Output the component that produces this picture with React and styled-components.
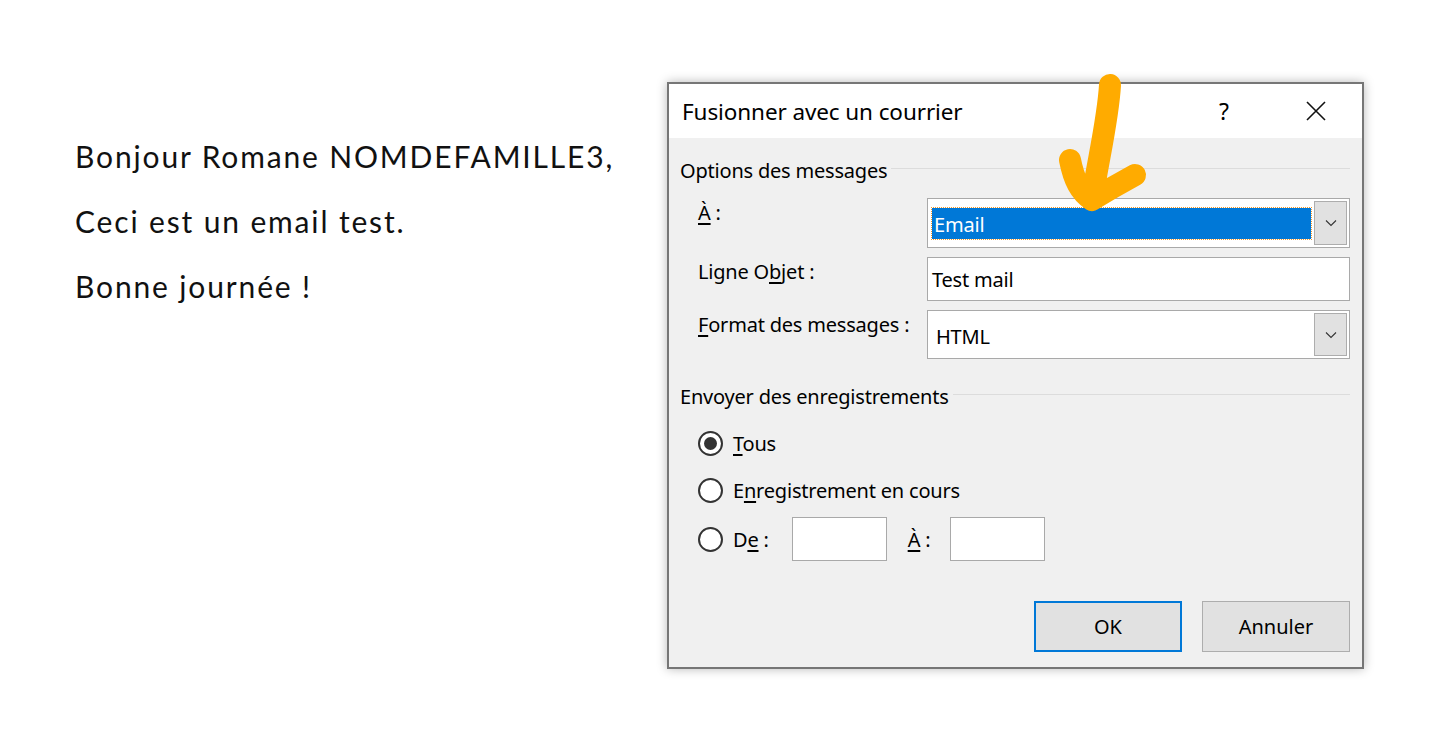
import React from 'react';
import styled, { createGlobalStyle } from 'styled-components';

const GlobalStyle = createGlobalStyle`
  html, body { margin: 0; padding: 0; background: #fff; }
  body { width: 1446px; height: 748px; overflow: hidden; }
`;

const Page = styled.div`
  position: relative;
  display: flex;
  align-items: flex-start;
  width: 1446px;
  height: 748px;
  padding: 82px 82px 0 75px;
  box-sizing: border-box;
`;

const Letter = styled.div`
  margin-top: 42px;
  font-family: "Lato", "Liberation Sans", sans-serif;
  font-size: 30px;
  letter-spacing: 1.85px;
  line-height: 65px;
  color: #111;
  p { margin: 0; }
`;

const Dialog = styled.div`
  margin-left: auto;
  width: 697px;
  height: 587px;
  box-sizing: border-box;
  border: 2px solid #767676;
  background: #f0f0f0;
  box-shadow: 0 0 10px rgba(0, 0, 0, 0.28);
  display: flex;
  flex-direction: column;
  font-family: "Noto Sans", "Open Sans", sans-serif;
  color: #000;
  u { text-decoration-thickness: 1.5px; text-underline-offset: 3px; }
`;

const TitleBar = styled.div`
  height: 54px;
  background: #fff;
  display: flex;
  align-items: center;
  padding-left: 13px;
`;

const Title = styled.div`
  flex: 1;
  font-size: 22.5px;
  letter-spacing: -0.1px;
`;

const TitleButton = styled.div`
  width: 92px;
  height: 54px;
  display: flex;
  align-items: center;
  justify-content: center;
  font-size: 23px;
`;

const Body = styled.div`
  flex: 1;
  display: flex;
  flex-direction: column;
  padding: 18px 12px 0 11px;
`;

const GroupHeader = styled.div`
  display: flex;
  align-items: center;
  gap: 4px;
  font-size: 20px;
  height: 28px;
  letter-spacing: -0.2px;
  &::after {
    content: "";
    flex: 1;
    height: 1px;
    background: #dcdcdc;
    margin-top: -3px;
  }
`;

const FieldGrid = styled.div`
  display: grid;
  grid-template-columns: 229px 1fr;
  row-gap: 9px;
  margin-top: 14px;
  padding-left: 18px;
`;

const Label = styled.div`
  font-size: 20px;
  letter-spacing: -0.2px;
  padding-top: ${p => p.$top || 4}px;
`;

const Combo = styled.div`
  height: ${p => p.$h}px;
  box-sizing: border-box;
  border: 1px solid #a9a9a9;
  background: #fff;
  display: flex;
  align-items: stretch;
  padding: 2px;
`;

const ComboValue = styled.div`
  flex: 1;
  display: flex;
  align-items: center;
  font-size: 20px;
  letter-spacing: -0.2px;
  padding-left: ${p => (p.$selected ? 2 : 6)}px;
  margin: ${p => (p.$selected ? '7px 3px 6px 2px' : '0')};
  background: ${p => (p.$selected ? '#0078d7' : 'transparent')};
  color: ${p => (p.$selected ? '#fff' : '#000')};
  outline: ${p => (p.$selected ? '1px dotted #f39a2c' : 'none')};
  padding-top: ${p => (p.$selected ? 1 : 4)}px;
`;

const DropButton = styled.div`
  width: 31px;
  background: #e1e1e1;
  border: 1px solid #adadad;
  display: flex;
  align-items: center;
  justify-content: center;
`;

const TextBox = styled.div`
  height: 44px;
  box-sizing: border-box;
  border: 1px solid #a9a9a9;
  background: #fff;
  display: flex;
  align-items: center;
  padding-left: 4px;
  font-size: 20px;
  letter-spacing: -0.2px;
`;

const RadioList = styled.div`
  display: flex;
  flex-direction: column;
  margin-top: 10px;
  padding-left: 18px;
`;

const RadioRow = styled.div`
  display: flex;
  align-items: center;
  height: ${p => p.$h || 47}px;
  font-size: 20px;
  letter-spacing: -0.2px;
`;

const RadioCircle = styled.span`
  width: 25px;
  height: 25px;
  box-sizing: border-box;
  border: 2px solid #333;
  border-radius: 50%;
  margin-right: 10px;
  display: flex;
  align-items: center;
  justify-content: center;
  background: #fff;
  &::after {
    content: "";
    display: ${p => (p.$checked ? 'block' : 'none')};
    width: 13px;
    height: 13px;
    border-radius: 50%;
    background: #333;
  }
`;

const SmallBox = styled.div`
  width: 95px;
  height: 44px;
  box-sizing: border-box;
  border: 1px solid #a9a9a9;
  background: #fff;
  margin-left: ${p => p.$ml}px;
  margin-right: ${p => p.$mr || 0}px;
`;

const Footer = styled.div`
  margin-top: auto;
  display: flex;
  justify-content: flex-end;
  gap: 20px;
  padding-bottom: 15px;
`;

const Button = styled.div`
  width: 148px;
  height: 51px;
  box-sizing: border-box;
  background: #e1e1e1;
  border: ${p => (p.$primary ? '2px solid #0078d7' : '1px solid #adadad')};
  display: flex;
  align-items: center;
  justify-content: center;
  font-size: 20px;
`;

const ArrowMark = styled.svg`
  position: absolute;
  left: 1050px;
  top: 60px;
  pointer-events: none;
`;

const Chevron = () => (
  <svg width="12" height="8" viewBox="0 0 12 8">
    <path d="M1 1.5 L6 6.5 L11 1.5" fill="none" stroke="#333" strokeWidth="1.1" />
  </svg>
);

export default function App() {
  return (
    <>
      <GlobalStyle />
      <Page>
        <Letter>
          <p>Bonjour Romane NOMDEFAMILLE3,</p>
          <p>Ceci est un email test.</p>
          <p>Bonne journée !</p>
        </Letter>
        <Dialog>
          <TitleBar>
            <Title>Fusionner avec un courrier</Title>
            <TitleButton>?</TitleButton>
            <TitleButton>
              <svg width="20" height="20" viewBox="0 0 20 20">
                <path d="M1 1 L19 19 M19 1 L1 19" stroke="#111" strokeWidth="1.6" />
              </svg>
            </TitleButton>
          </TitleBar>
          <Body>
            <GroupHeader>Options des messages</GroupHeader>
            <FieldGrid>
              <Label $top={1}><u>À</u> :</Label>
              <Combo $h={50}>
                <ComboValue $selected>Email</ComboValue>
                <DropButton><Chevron /></DropButton>
              </Combo>
              <Label $top={1}>Ligne O<u>b</u>jet :</Label>
              <TextBox>Test mail</TextBox>
              <Label $top={1}><u>F</u>ormat des messages :</Label>
              <Combo $h={49}>
                <ComboValue>HTML</ComboValue>
                <DropButton><Chevron /></DropButton>
              </Combo>
            </FieldGrid>
            <GroupHeader style={{ marginTop: 23 }}>Envoyer des enregistrements</GroupHeader>
            <RadioList>
              <RadioRow>
                <RadioCircle $checked /><span><u>T</u>ous</span>
              </RadioRow>
              <RadioRow>
                <RadioCircle /><span>E<u>n</u>registrement en cours</span>
              </RadioRow>
              <RadioRow $h={50}>
                <RadioCircle /><span>D<u>e</u> :</span>
                <SmallBox $ml={23} $mr={21} />
                <span><u>À</u> :</span>
                <SmallBox $ml={20} />
              </RadioRow>
            </RadioList>
            <Footer>
              <Button $primary>OK</Button>
              <Button>Annuler</Button>
            </Footer>
          </Body>
        </Dialog>
        <ArrowMark width="120" height="160" viewBox="0 0 120 160">
          <path
            d="M60 25 C58 60 48 100 42 140 M20 100 C24 120 30 132 42 140 C58 130 72 122 85 115"
            fill="none"
            stroke="#ffab00"
            strokeWidth="22"
            strokeLinecap="round"
            strokeLinejoin="round"
          />
        </ArrowMark>
      </Page>
    </>
  );
}
